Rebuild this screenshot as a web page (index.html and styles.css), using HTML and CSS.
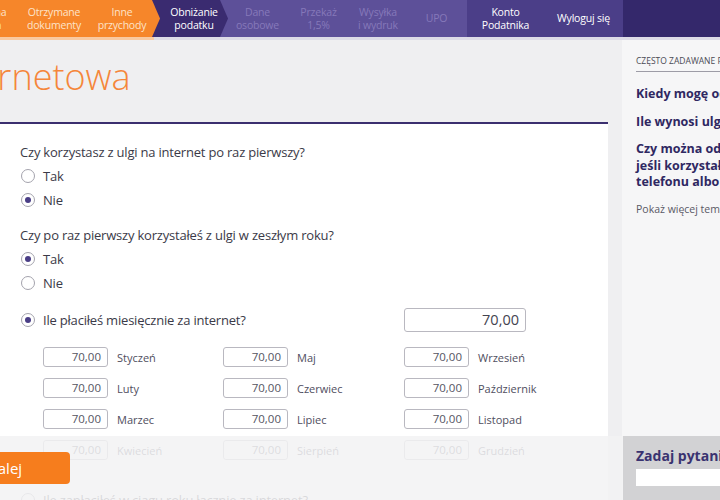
FILE: index.html
```html
<!DOCTYPE html>
<html lang="pl">
<head>
<meta charset="utf-8">
<title>Ulga internetowa</title>
<link rel="stylesheet" href="styles.css">
</head>
<body>
<nav class="nav">
  <div class="step step-done step-first">Forma<br>Plan</div>
  <div class="step step-done step-second">Otrzymane<br>dokumenty</div>
  <div class="step step-done step-last-done">Inne<br>przychody</div>
  <div class="step step-active">Obniżanie<br>podatku</div>
  <div class="step step-todo step-dane">Dane<br>osobowe</div>
  <div class="step step-todo step-przekaz">Przekaż<br>1,5%</div>
  <div class="step step-todo step-wysylka">Wysyłka<br>i wydruk</div>
  <div class="step step-todo step-upo">UPO</div>
  <div class="account">
    <div class="acc-item acc-konto">Konto<br>Podatnika</div>
    <div class="acc-item acc-logout">Wyloguj się</div>
  </div>
  <div class="nav-fill"></div>
</nav>
<div class="progress"><div class="progress-done"></div></div>

<div class="layout">
  <main class="main">
    <h1 class="title">Ulga internetowa</h1>
    <section class="card">
      <div class="question">
        <p class="q-text">Czy korzystasz z ulgi na internet po raz pierwszy?</p>
        <label class="radio"><span class="dot"></span>Tak</label>
        <label class="radio"><span class="dot checked"></span>Nie</label>
      </div>
      <div class="question">
        <p class="q-text">Czy po raz pierwszy korzystałeś z ulgi w zeszłym roku?</p>
        <label class="radio"><span class="dot checked"></span>Tak</label>
        <label class="radio"><span class="dot"></span>Nie</label>
      </div>
      <div class="amount-row">
        <label class="radio radio-inline"><span class="dot checked"></span>Ile płaciłeś miesięcznie za internet?</label>
        <div class="big-input">70,00</div>
      </div>
      <div class="months">
        <div class="month"><div class="m-input">70,00</div><span>Styczeń</span></div>
        <div class="month"><div class="m-input">70,00</div><span>Maj</span></div>
        <div class="month"><div class="m-input">70,00</div><span>Wrzesień</span></div>
        <div class="month"><div class="m-input">70,00</div><span>Luty</span></div>
        <div class="month"><div class="m-input">70,00</div><span>Czerwiec</span></div>
        <div class="month"><div class="m-input">70,00</div><span>Październik</span></div>
        <div class="month"><div class="m-input">70,00</div><span>Marzec</span></div>
        <div class="month"><div class="m-input">70,00</div><span>Lipiec</span></div>
        <div class="month"><div class="m-input">70,00</div><span>Listopad</span></div>
        <div class="month"><div class="m-input">70,00</div><span>Kwiecień</span></div>
        <div class="month"><div class="m-input">70,00</div><span>Sierpień</span></div>
        <div class="month"><div class="m-input">70,00</div><span>Grudzień</span></div>
      </div>
      <div class="total-row">
        <label class="radio radio-inline"><span class="dot"></span>Ile zapłaciłeś w ciągu roku łącznie za internet?</label>
      </div>
    </section>
  </main>
  <aside class="sidebar">
    <h2 class="faq-head">Często zadawane pytania</h2>
    <ul class="faq">
      <li>Kiedy mogę odliczyć ulgę na internet?</li>
      <li>Ile wynosi ulga na internet?</li>
      <li>Czy można odliczyć ulgę,<br>jeśli korzystałem z internetu w<br>telefonu albo tabletu?</li>
    </ul>
    <a class="more">Pokaż więcej tematów</a>
  </aside>
</div>

<footer class="bottom">
  <button class="next">Dalej</button>
  <div class="ask">
    <div class="ask-title">Zadaj pytanie</div>
    <div class="ask-input"></div>
  </div>
</footer>
</body>
</html>
```

FILE: styles.css
```css
* { box-sizing: border-box; }
html, body { margin: 0; padding: 0; }
body {
  width: 720px;
  height: 500px;
  overflow: hidden;
  background: #efeff1;
  font-family: "Open Sans", "Noto Sans", sans-serif;
  color: #3b3a4a;
  position: relative;
}

/* NAV */
.nav {
  display: flex;
  height: 37px;
  background: #34286b;
  font-size: 10.5px;
  letter-spacing: -0.2px;
  line-height: 12.5px;
}
.step, .acc-item {
  display: flex;
  align-items: center;
  justify-content: center;
  text-align: center;
  flex: none;
}
.step-done { background: #f6862a; color: #fde3c9; }
.step-first { width: 62px; margin-left: -40px; }
.step-second { width: 64px; }
.step-last-done {
  width: 74px;
  position: relative;
  z-index: 2;
  clip-path: polygon(0 0, 66px 0, 74px 50%, 66px 100%, 0 100%);
  padding-right: 2px;
}
.step-active {
  width: 76px;
  margin-left: -8px;
  padding-left: 8px;
  background: #3a2b70;
  color: #ffffff;
  position: relative;
  z-index: 1;
  clip-path: polygon(0 0, 68px 0, 76px 50%, 68px 100%, 0 100%);
}
.step-todo {
  background: #5d5099;
  color: #8679b9;
}
.step-dane { margin-left: -8px; width: 67px; padding-left: 8px; }
.step-przekaz { width: 63px; }
.step-wysylka { width: 56px; }
.step-upo { width: 61px; }
.account {
  display: flex;
  background: #4b3e88;
  width: 156px;
  flex: none;
}
.acc-item { color: #ffffff; }
.acc-konto { width: 77px; }
.acc-logout { width: 79px; }
.nav-fill { flex: 1; }

.progress {
  height: 3px;
  background: #dddbe7;
}
.progress-done {
  width: 154px;
  height: 100%;
  background: #f9c9a0;
}

/* LAYOUT */
.layout {
  display: flex;
  align-items: stretch;
  height: 460px;
}
.main {
  width: 622px;
  flex: none;
  padding-right: 14px;
}
.title {
  margin: 0 0 0 -145px;
  height: 82px;
  padding-top: 13px;
  font-size: 36px;
  font-weight: 300;
  line-height: 48px;
  color: #f5863a;
  white-space: nowrap;
}
.card {
  background: #ffffff;
  border-top: 2px solid #3b2f6f;
  padding: 18px 0 0 20px;
  height: 420px;
}
.question { margin-bottom: 13px; }
.q-text {
  margin: 0 0 2px 0;
  font-size: 13px;
  letter-spacing: -0.2px;
  line-height: 20px;
  color: #3b3a48;
}
.radio {
  display: flex;
  align-items: center;
  gap: 8px;
  height: 24px;
  font-size: 13px;
  letter-spacing: -0.2px;
  color: #3b3a48;
}
.radio .dot { margin-left: 1px; }
.dot {
  width: 14px;
  height: 14px;
  border-radius: 50%;
  border: 1.5px solid #a4a3ad;
  flex: none;
  display: flex;
  align-items: center;
  justify-content: center;
  background: #fff;
}
.dot.checked::after {
  content: "";
  width: 6px;
  height: 6px;
  border-radius: 50%;
  background: #4a3e86;
}
.amount-row {
  display: flex;
  align-items: center;
  height: 24px;
  margin-top: 7px;
}
.radio-inline { width: 384px; flex: none; }
.big-input {
  width: 122px;
  height: 24px;
  border: 1px solid #b9b8c0;
  border-radius: 3px;
  text-align: right;
  padding-right: 6px;
  font-size: 14.5px;
  line-height: 22px;
  color: #444450;
}
.months {
  display: grid;
  grid-template-columns: 180px 181px 140px;
  row-gap: 11px;
  margin: 15px 0 0 23px;
}
.month {
  display: flex;
  align-items: center;
  gap: 9px;
  font-size: 11px;
  color: #4f4e5e;
}
.m-input {
  width: 65px;
  height: 20px;
  border: 1px solid #b9b8c0;
  border-radius: 3px;
  text-align: right;
  padding-right: 6px;
  font-size: 11.5px;
  line-height: 18px;
  color: #555562;
}
.total-row { margin-top: 28px; }

/* SIDEBAR */
.sidebar {
  flex: none;
  width: 260px;
  background: #f6f6f7;
  padding: 15px 0 0 14px;
}
.faq-head {
  margin: 0;
  font-size: 8.5px;
  font-weight: 400;
  text-transform: uppercase;
  color: #4a4a55;
  line-height: 12px;
  padding-bottom: 4px;
  border-bottom: 1px solid #9d9ca6;
  white-space: nowrap;
}
.faq {
  list-style: none;
  margin: 14px 0 0 0;
  padding: 0;
}
.faq li {
  font-size: 12.5px;
  font-weight: 700;
  line-height: 16.5px;
  color: #2f2862;
  margin-bottom: 11px;
  white-space: nowrap;
}
.more {
  display: block;
  margin-top: 11px;
  font-size: 10.5px;
  color: #5a5966;
}

/* BOTTOM OVERLAY */
.bottom {
  position: absolute;
  left: 0;
  right: 0;
  bottom: 0;
  height: 64px;
  background: rgba(242, 242, 243, 0.86);
  display: flex;
  align-items: flex-start;
  justify-content: space-between;
}
.next {
  margin: 16px 0 0 -49px;
  width: 119px;
  height: 32px;
  border: none;
  border-radius: 4px;
  background: #f67d1d;
  color: #fff;
  font-family: "Open Sans", sans-serif;
  font-size: 15px;
  padding: 0 12px 0 0;
}
.ask {
  width: 97px;
  height: 64px;
  background: #d2d2d4;
  padding: 11px 0 0 13px;
  overflow: hidden;
}
.ask-title {
  font-size: 14px;
  font-weight: 700;
  color: #3a3370;
  white-space: nowrap;
  line-height: 18px;
}
.ask-input {
  margin-top: 4px;
  height: 17px;
  background: #fff;
  width: 200px;
}
```
